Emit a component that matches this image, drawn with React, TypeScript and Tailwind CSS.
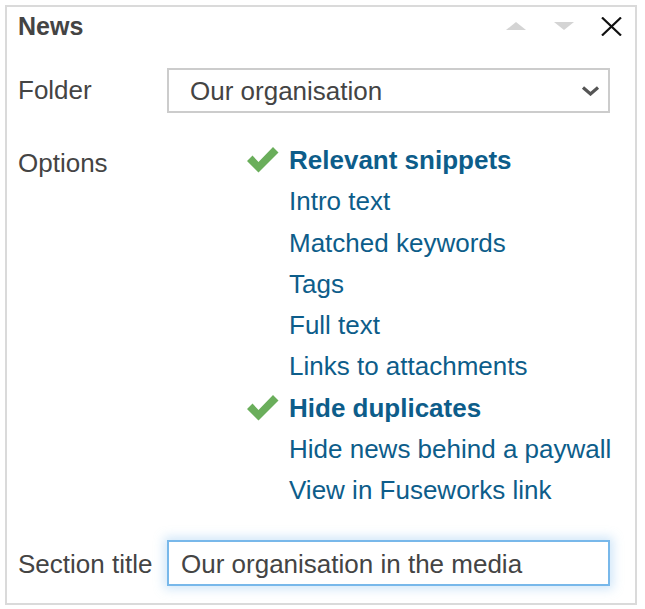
import type { ReactNode } from "react";

const FONT = { fontFamily: '"Liberation Sans", Arial, sans-serif' };

interface Option {
  label: string;
  checked?: boolean;
}

const OPTIONS: Option[] = [
  { label: "Relevant snippets", checked: true },
  { label: "Intro text" },
  { label: "Matched keywords" },
  { label: "Tags" },
  { label: "Full text" },
  { label: "Links to attachments" },
  { label: "Hide duplicates", checked: true },
  { label: "Hide news behind a paywall" },
  { label: "View in Fuseworks link" },
];

function Check() {
  return (
    <svg width="32" height="28" viewBox="0 0 32 28" aria-hidden="true">
      <path d="M0 16 L5.5 10.5 L11.5 17 L26 2 L31.5 7.5 L11.5 27.5 Z" fill="#6aae5b" />
    </svg>
  );
}

function Row({ label, children, labelClass = "" }: { label: string; children: ReactNode; labelClass?: string }) {
  return (
    <div className="flex">
      <div className={`w-[149px] shrink-0 text-[#444] whitespace-nowrap ${labelClass}`}>{label}</div>
      <div className="flex-1">{children}</div>
    </div>
  );
}

export default function App() {
  return (
    <div className="bg-white p-[5px] w-[645px] h-[609px]" style={FONT}>
      <div className="w-[632px] h-[600px] border-2 border-[#dadada] pl-[11px] pr-[13px] text-[26px] leading-[41px]">
        {/* header */}
        <div className="flex items-center h-[38px]">
          <h2 className="flex-1 font-bold text-[#444] text-[25px]">News</h2>
          <div className="flex items-center">
            <svg width="20" height="8" viewBox="0 0 20 8" className="mr-[28px]" aria-hidden="true">
              <path d="M0 8 L10 0 L20 8 Z" fill="#d4d4d4" />
            </svg>
            <svg width="20" height="8" viewBox="0 0 20 8" className="mr-[27px]" aria-hidden="true">
              <path d="M0 0 L20 0 L10 8 Z" fill="#d4d4d4" />
            </svg>
            <svg width="21" height="19" viewBox="0 0 21 19" aria-hidden="true">
              <path d="M1 0.5 L20 18.5 M20 0.5 L1 18.5" stroke="#111" strokeWidth="2.2" />
            </svg>
          </div>
        </div>

        {/* folder */}
        <div className="mt-[23px]">
          <Row label="Folder" labelClass="leading-[45px]">
            <div className="flex items-center h-[45px] w-[443px] border-2 border-[#cccccc] pl-[21px] pr-[8px] text-[#444]">
              <span className="flex-1 pt-[2px]">Our organisation</span>
              <svg width="19" height="10" viewBox="0 0 19 10" aria-hidden="true">
                <path d="M2 1.5 L9.5 8 L17 1.5" stroke="#555" strokeWidth="3.2" fill="none" />
              </svg>
            </div>
          </Row>
        </div>

        {/* options */}
        <div className="mt-[27px]">
          <Row label="Options" labelClass="pt-[3px]">
            <ul className="pl-[80px]">
              {OPTIONS.map((o) => (
                <li key={o.label} className="flex items-center h-[41.25px] text-[#0d5d8a] whitespace-nowrap">
                  <span className="w-[42px] shrink-0 -mt-[3px]">{o.checked && <Check />}</span>
                  <span className={o.checked ? "font-bold" : ""}>{o.label}</span>
                </li>
              ))}
            </ul>
          </Row>
        </div>

        {/* section title */}
        <div className="mt-[29px]">
          <Row label="Section title" labelClass="leading-[46px] pt-[1px]">
            <div className="flex items-center h-[46px] w-[443px] border-2 border-[#78b8ea] pl-[12px] pt-[2px] text-[#444] shadow-[0_0_10px_3px_rgba(120,184,234,0.35)]">
              Our organisation in the media
            </div>
          </Row>
        </div>
      </div>
    </div>
  );
}
